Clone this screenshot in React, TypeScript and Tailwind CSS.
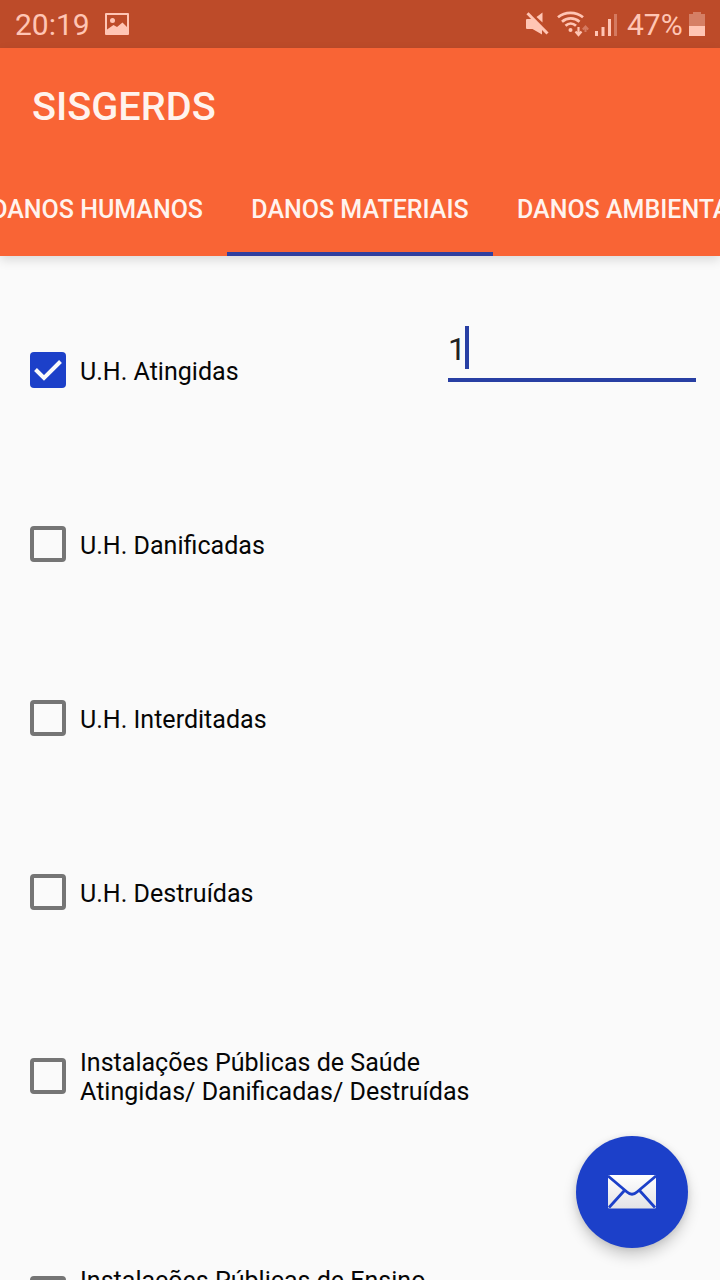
import React from "react";

type Item = { lines: string[]; checked?: boolean; height: string };

const items: Item[] = [
  { lines: ["U.H. Atingidas"], checked: true, height: "h-[174px]" },
  { lines: ["U.H. Danificadas"], height: "h-[174px]" },
  { lines: ["U.H. Interditadas"], height: "h-[174px]" },
  { lines: ["U.H. Destruídas"], height: "h-[174px]" },
  { lines: ["Instalações Públicas de Saúde", "Atingidas/ Danificadas/ Destruídas"], height: "h-[194px]" },
  { lines: ["Instalações Públicas de Ensino", "Atingidas/ Danificadas/ Destruídas"], height: "h-[242px]" },
];

function StatusBar() {
  return (
    <div className="flex h-12 shrink-0 items-center bg-[#bd4b29] text-[#ffc5b4]">
      <span className="ml-[15px] w-[90px] pt-px text-[30px] leading-[48px]">20:19</span>
      <svg className="h-[22px] w-6" viewBox="0 0 24 22" fill="currentColor">
        <path fillRule="evenodd" d="M1 0h22a1 1 0 0 1 1 1v20a1 1 0 0 1-1 1H1a1 1 0 0 1-1-1V1a1 1 0 0 1 1-1zM2 2v14.500l6.500-4.500 3.500 2 5.500-4.500 4.500 4.500V2z" />
        <circle cx="7.500" cy="7.500" r="2.500" />
      </svg>
      <svg className="ml-auto h-12 w-[100px]" viewBox="520 0 100 48" fill="none">
        <path d="M526 20q0-1 1-1h5l10 9v6.500l-9.500-5.500H527q-1 0-1-1z" fill="currentColor" />
        <path d="M542.500 12.500v10l-6-5.500z" fill="currentColor" />
        <path d="M527.500 13.200l20 20.300" stroke="currentColor" strokeWidth="3" />
        <path d="M558 17.300c7-6 18-6 25 0M562 21.800c5-4.500 12.500-4.500 17.500 0M565.500 25.800c3.200-2.900 7.300-2.900 10.500 0" stroke="currentColor" strokeWidth="2.700" />
        <circle cx="570.500" cy="30" r="2" fill="currentColor" />
        <path d="M578.500 27v7.500M575.500 31.500l3 3.500 3-3.500" stroke="currentColor" strokeWidth="2.200" />
        <path d="M585.500 32v-5M582.800 29.500l2.700-3 2.700 3" stroke="#d57a60" strokeWidth="2" />
        <path d="M595 31h3v5h-3zM601.500 27h3v9h-3zM608 19h3v17h-3z" fill="currentColor" />
        <path d="M614 14h3v22h-3z" fill="#d57a60" />
      </svg>
      <span className="ml-[7px] w-[62px] pt-px text-[30px] leading-[48px]">47%</span>
      <svg className="mr-[15px] h-6 w-4" viewBox="0 0 16 24">
        <path d="M4 0h8v2h4v12H0V2h4z" fill="#d57f65" />
        <path d="M0 14h16v10H0z" fill="#ffc5b4" />
      </svg>
    </div>
  );
}

function AppBar() {
  return (
    <header className="z-10 h-[208px] shrink-0 bg-[#f96435] text-[#fff3ee] shadow-[0_4px_10px_rgba(0,0,0,0.13)]">
      <h1 className="flex h-28 items-center pt-1.5 pl-8 text-[39.700px] font-medium">SISGERDS</h1>
      <nav className="flex h-24 overflow-hidden text-[25px] font-medium whitespace-nowrap">
        <div className="flex w-[227px] shrink-0 items-center justify-end pt-1 pr-6">DANOS HUMANOS</div>
        <div className="flex w-[266px] shrink-0 items-center justify-center border-b-4 border-[#303f9f] pt-2">DANOS MATERIAIS</div>
        <div className="flex w-[290px] shrink-0 items-center pt-1 pl-6">DANOS AMBIENTAIS</div>
      </nav>
    </header>
  );
}

function Checkbox({ checked }: { checked?: boolean }) {
  return checked ? (
    <span className="size-9 shrink-0 rounded-[4px] bg-[#1c40c9]">
      <svg viewBox="0 0 36 36" fill="none" stroke="#fafafa" strokeWidth="4">
        <path d="M5.500 17.500l8.500 8.500 16.500-16.500" />
      </svg>
    </span>
  ) : (
    <span className="size-9 shrink-0 rounded-[4px] border-4 border-[#757575]" />
  );
}

export default function App() {
  return (
    <div className="relative flex h-[1280px] w-[720px] flex-col overflow-hidden bg-[#fafafa] font-[Roboto,sans-serif]">
      <StatusBar />
      <AppBar />
      <main className="min-h-0 flex-1 overflow-hidden pt-[27px]">
        {items.map((item, i) => (
          <div key={i} className={`flex items-center pr-6 pl-[30px] ${item.height}`}>
            <Checkbox checked={item.checked} />
            <div className="ml-3.5 pt-0.5 text-[25.050px] leading-[29px] whitespace-nowrap text-[#060606]">
              {item.lines.map((line) => (
                <p key={line}>{line}</p>
              ))}
            </div>
            {item.checked && (
              <div className="mb-9 ml-auto flex h-[60px] w-[248px] items-start border-b-4 border-[#283fa3] pt-1 text-[32px] leading-[43px] text-[#212121]">
                <span className="w-[17px] pt-0.5">1</span>
                <span className="h-[43px] w-1 bg-[#283fa3]" />
              </div>
            )}
          </div>
        ))}
      </main>
      <button className="absolute right-8 bottom-8 flex size-28 items-center justify-center rounded-full bg-[#1c40c9] shadow-[0_8px_14px_rgba(0,0,0,0.18),0_1px_6px_rgba(0,0,0,0.1)]">
        <svg className="h-[34px] w-12" viewBox="0 0 48 34">
          <defs>
            <linearGradient id="paper" x1="0" y1="0" x2="0" y2="1">
              <stop offset="0" stopColor="#fff" />
              <stop offset="1" stopColor="#e3e3e6" />
            </linearGradient>
          </defs>
          <rect width="48" height="33.500" rx="1.500" fill="url(#paper)" />
          <path d="M0 1l19 16q5 4.500 10 0L48 1M1 32.500l15-16.500M47 32.500l-15-16.500" fill="none" stroke="#1c40c9" strokeWidth="2.800" />
        </svg>
      </button>
    </div>
  );
}
